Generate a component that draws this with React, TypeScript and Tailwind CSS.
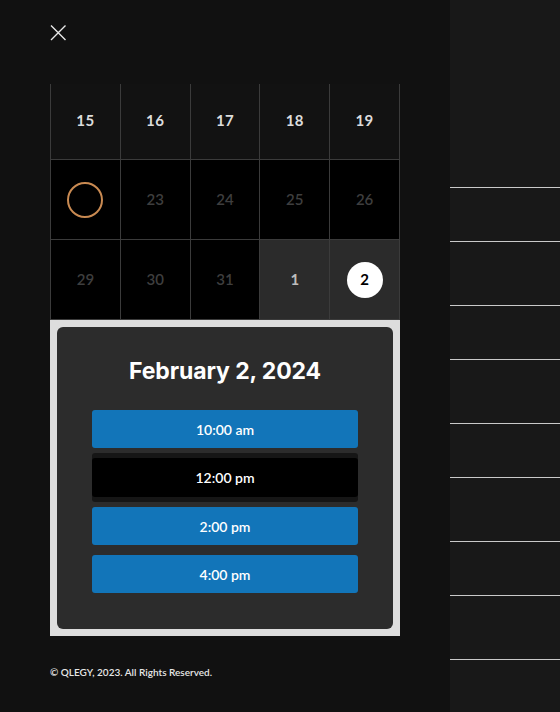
import React from "react";

const row1 = ["15", "16", "17", "18", "19"];
const row2 = ["22", "23", "24", "25", "26"];
const times = ["10:00 am", "12:00 pm", "2:00 pm", "4:00 pm"];
const listRows = [54, 64, 54, 64, 54, 64, 54, 64, 60];

export default function App() {
  return (
    <div className="flex h-[712px] w-[560px] overflow-hidden bg-[#111111] font-['Lato',sans-serif]">
      {/* left drawer */}
      <div className="w-[450px] shrink-0 pl-[50px] pt-[25px]">
        <button className="block h-[16px] w-[16px]">
          <svg width="16" height="16" viewBox="0 0 16 16" fill="none">
            <path d="M1 0.5L15.5 15M15.5 0.5L1 15" stroke="#e8e8e8" strokeWidth="1.4" />
          </svg>
        </button>

        <div className="mt-[43px] w-[350px]">
          {/* calendar */}
          <div className="grid grid-cols-5 border-r border-[#3b3b3b]">
            {row1.map((d) => (
              <div
                key={d}
                className="flex h-[76px] items-center justify-center border-b border-l border-[#3b3b3b] bg-[#121212] pb-[3px] text-[15px] font-bold tracking-wide text-[#dcdcdc]"
              >
                {d}
              </div>
            ))}
            {row2.map((d, i) => (
              <div
                key={d}
                className="flex h-[80px] items-center justify-center border-b border-l border-[#3b3b3b] bg-black text-[15px] font-semibold text-[#3e3e3e]"
              >
                {i === 0 ? (
                  <span className="h-[36px] w-[36px] rounded-full border-2 border-[#c98a52]" />
                ) : (
                  d
                )}
              </div>
            ))}
            {["29", "30", "31"].map((d) => (
              <div
                key={d}
                className="flex h-[80px] items-center justify-center border-b border-l border-[#3b3b3b] bg-black text-[15px] font-semibold text-[#3e3e3e]"
              >
                {d}
              </div>
            ))}
            <div className="flex h-[80px] items-center justify-center border-b border-l border-[#3b3b3b] bg-[#2b2b2b] text-[15px] font-bold text-[#bdbdbd]">
              1
            </div>
            <div className="flex h-[80px] items-center justify-center border-b border-l border-[#3b3b3b] bg-[#2b2b2b]">
              <span className="flex h-[36px] w-[36px] items-center justify-center rounded-full bg-white text-[15px] font-bold text-black">
                2
              </span>
            </div>
          </div>

          {/* time slots */}
          <div className="bg-[#dddddd] px-[7px] pb-[7px] pt-[7px]">
            <div className="flex flex-col items-center rounded-md bg-[#2c2c2c] pb-[36px] pt-[30px]">
              <h2 className="font-['Inter',sans-serif] text-[23px] font-bold leading-[28px] tracking-[-0.1px] text-white">
                February 2, 2024
              </h2>
              <div className="mt-[25px] flex w-[266px] flex-col gap-[10px]">
                {times.map((t, i) =>
                  i === 1 ? (
                    <button
                      key={t}
                      className="h-[39px] rounded-[3px] bg-black text-[14px] font-semibold text-white shadow-[0_5px_0_#161616,0_-5px_0_#161616]"
                    >
                      {t}
                    </button>
                  ) : (
                    <button
                      key={t}
                      className="h-[38px] rounded-[3px] bg-[#1275b9] text-[14px] font-semibold text-white"
                    >
                      {t}
                    </button>
                  )
                )}
              </div>
            </div>
          </div>
        </div>

        <p className="mt-[29px] text-[10px] font-semibold leading-[14px] text-[#e6e6e6]">
          © QLEGY, 2023. All Rights Reserved.
        </p>
      </div>

      {/* right content behind */}
      <div className="flex flex-1 flex-col bg-[#181818] pt-[187px]">
        {listRows.map((h, i) => (
          <div key={i} className="shrink-0 border-t border-[#c9c9c9]" style={{ height: h }} />
        ))}
      </div>
    </div>
  );
}
